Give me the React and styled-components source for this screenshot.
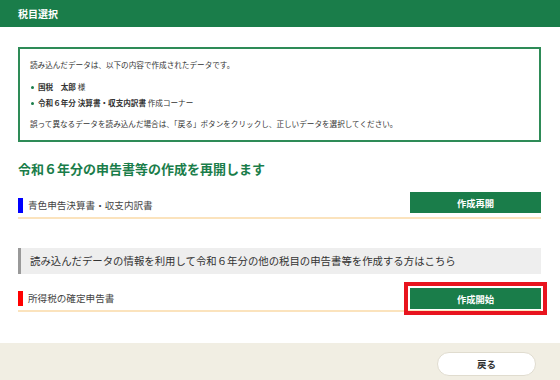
import styled, { createGlobalStyle } from "styled-components";

const GlobalStyle = createGlobalStyle`
    body
    {
        margin: 0;
        font-family: "Noto Sans CJK JP", "Noto Sans", sans-serif;
        color: #333;
        background: #fff;
    }
`;

function Row({ color, label, button, highlight }) {
    return (
        <RowWrap>
            <RowLabel $color={color}>{label}</RowLabel>
            <GreenButton $highlight={highlight}>{button}</GreenButton>
        </RowWrap>
    );
}

function App() {
    return (
        <Page>
            <GlobalStyle />
            <Header>税目選択</Header>
            <Main>
                <InfoBox>
                    <p>読み込んだデータは、以下の内容で作成されたデータです。</p>
                    <ul>
                        <li><b>国税　太郎</b> 様</li>
                        <li><b>令和６年分 決算書・収支内訳書</b> 作成コーナー</li>
                    </ul>
                    <p>誤って異なるデータを読み込んだ場合は、「戻る」ボタンをクリックし、正しいデータを選択してください。</p>
                </InfoBox>
                <Heading>令和６年分の申告書等の作成を再開します</Heading>
                <Row color="#0000ff" label="青色申告決算書・収支内訳書" button="作成再開" />
                <Notice>読み込んだデータの情報を利用して令和６年分の他の税目の申告書等を作成する方はこちら</Notice>
                <Row color="#ff0000" label="所得税の確定申告書" button="作成開始" highlight />
            </Main>
            <Footer>
                <BackButton>戻る</BackButton>
            </Footer>
        </Page>
    );
}

const Page = styled.div`
    display: flex;
    flex-direction: column;
    height: 380px;
    overflow: hidden;
`;

const Header = styled.div`
    height: 27px;
    line-height: 27px;
    padding-left: 18px;
    background: #1a7d4a;
    color: #fff;
    font-size: 10px;
    font-weight: bold;
`;

const Main = styled.div`
    flex: 1;
    padding: 20px 19px 0 18px;
`;

const InfoBox = styled.div`
    box-sizing: border-box;
    height: 95px;
    border: 2px solid #2e8b57;
    padding: 9px 10px 0;
    font-size: 7.6px;
    color: #333;

    p
    {
        margin: 0;
        line-height: 14px;
    }

    ul
    {
        list-style: none;
        margin: 7px 0 6px;
        padding: 0;
    }

    li
    {
        position: relative;
        padding-left: 8px;
        line-height: 16px;
    }

    li::before
    {
        content: "";
        position: absolute;
        left: 1px;
        top: 7px;
        width: 3px;
        height: 3px;
        border-radius: 50%;
        background: #1a7d4a;
    }
`;

const Heading = styled.h2`
    margin: 18px 0 0;
    font-size: 13px;
    line-height: 18px;
    font-weight: bold;
    color: #1a7d4a;
`;

const RowWrap = styled.div`
    display: flex;
    align-items: flex-end;
    justify-content: space-between;
    margin-top: 14px;
    border-bottom: 2px solid #fbe3bd;
    padding-bottom: 4px;
`;

const RowLabel = styled.div`
    border-left: 5px solid ${p => p.$color};
    padding-left: 5px;
    font-size: 9.6px;
    line-height: 15px;
    color: #444;
    margin-bottom: 0;
`;

const GreenButton = styled.button`
    width: 131px;
    height: 21px;
    border: none;
    background: #1a7d4a;
    color: #fff;
    font-family: inherit;
    font-size: 9.3px;
    font-weight: bold;
    padding: 0;
    cursor: pointer;
    outline: ${p => (p.$highlight ? "4px solid #e8141e" : "none")};
    outline-offset: 2px;
    margin-bottom: ${p => (p.$highlight ? "-3px" : "0")};
`;

const Notice = styled.div`
    margin-top: 29px;
    height: 26px;
    line-height: 26px;
    background: #eeeeee;
    border-left: 3px solid #999;
    padding-left: 9px;
    font-size: 10.4px;
    color: #333;
`;

const Footer = styled.div`
    height: 37px;
    background: #f1eee3;
    display: flex;
    justify-content: flex-end;
    align-items: flex-start;
    padding: 9px 24px 0 0;
    box-sizing: border-box;
`;

const BackButton = styled.button`
    width: 99px;
    height: 24px;
    border-radius: 12px;
    border: 1px solid #e0dccf;
    background: #fff;
    font-family: inherit;
    font-size: 9.5px;
    font-weight: bold;
    color: #333;
    cursor: pointer;
`;

export default App
